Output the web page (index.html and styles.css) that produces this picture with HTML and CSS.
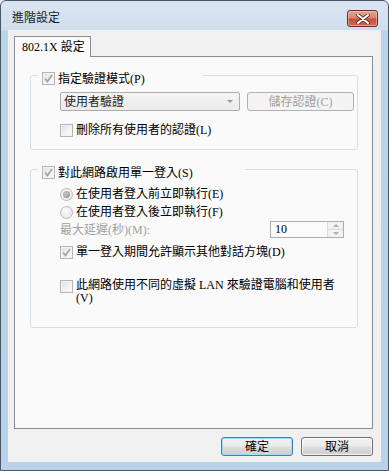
FILE: index.html
```html
<!DOCTYPE html>
<html lang="zh-Hant">
<head>
    <meta charset="UTF-8">
    <meta name="viewport" content="width=device-width, initial-scale=1.0">
    <title>進階設定</title>
    <link rel="stylesheet" href="styles.css">
</head>
<body>
    <div class="window">
        <div class="titlebar">
            <span class="title">進階設定</span>
            <button class="close-btn" aria-label="關閉">
                <svg width="14" height="10" viewBox="0 0 14 10">
                    <path d="M2 1 L12 9 M12 1 L2 9" stroke="#5a2a22" stroke-width="3.6" stroke-linecap="round"/>
                    <path d="M2 1 L12 9 M12 1 L2 9" stroke="#ffffff" stroke-width="2" stroke-linecap="round"/>
                </svg>
            </button>
        </div>

        <div class="client">
            <div class="tabs">
                <div class="tab active">802.1X 設定</div>
            </div>

            <div class="tab-panel">
                <div class="group group-auth">
                    <div class="group-head head-auth">
                        <span class="check checked"><svg width="11" height="11" viewBox="0 0 11 11"><path d="M2 5.5 L4.5 8.5 L9 2" fill="none" stroke="#a3a3a3" stroke-width="1.7"/></svg></span>
                        <span class="label">指定驗證模式(P)</span>
                    </div>
                    <div class="row row-mode">
                        <div class="select">
                            <span>使用者驗證</span>
                            <span class="arrow"></span>
                        </div>
                        <button class="btn btn-save" disabled>儲存認證(C)</button>
                    </div>
                    <div class="row row-check row-clear">
                        <span class="check"></span>
                        <span class="label">刪除所有使用者的認證(L)</span>
                    </div>
                </div>

                <div class="group group-sso">
                    <div class="group-head head-sso">
                        <span class="check checked"><svg width="11" height="11" viewBox="0 0 11 11"><path d="M2 5.5 L4.5 8.5 L9 2" fill="none" stroke="#a3a3a3" stroke-width="1.7"/></svg></span>
                        <span class="label">對此網路啟用單一登入(S)</span>
                    </div>
                    <div class="row row-radio row-before">
                        <span class="radio selected"></span>
                        <span class="label">在使用者登入前立即執行(E)</span>
                    </div>
                    <div class="row row-radio row-after">
                        <span class="radio"></span>
                        <span class="label">在使用者登入後立即執行(F)</span>
                    </div>
                    <div class="row row-delay">
                        <span class="label disabled">最大延遲(秒)(M):</span>
                        <div class="spinner">
                            <span class="spin-value">10</span>
                            <span class="spin-buttons">
                                <span class="spin-up"></span>
                                <span class="spin-down"></span>
                            </span>
                        </div>
                    </div>
                    <div class="row row-check row-dialogs">
                        <span class="check checked"><svg width="11" height="11" viewBox="0 0 11 11"><path d="M2 5.5 L4.5 8.5 L9 2" fill="none" stroke="#a3a3a3" stroke-width="1.7"/></svg></span>
                        <span class="label">單一登入期間允許顯示其他對話方塊(D)</span>
                    </div>
                    <div class="row row-check row-vlan">
                        <span class="check"></span>
                        <span class="label">此網路使用不同的虛擬 LAN 來驗證電腦和使用者<br>(V)</span>
                    </div>
                </div>
            </div>

            <div class="dialog-buttons">
                <button class="btn-dialog default">確定</button>
                <button class="btn-dialog">取消</button>
            </div>
        </div>
    </div>
</body>
</html>
```

FILE: styles.css
```css
* {
    margin: 0;
    padding: 0;
    box-sizing: border-box;
}

body {
    background: #ffffff;
    font-family: "Liberation Serif", "Noto Sans CJK TC", serif;
    font-size: 12px;
    line-height: 14px;
    color: #000;
}

button {
    font: inherit;
    color: inherit;
}

/* window frame */
.window {
    width: 389px;
    height: 471px;
    border: 1px solid #4b5664;
    border-radius: 6px 6px 0 0;
    background: linear-gradient(to bottom, #dae5f1 0, #cfdeee 29px, #bad2ea 30px, #b9d1ea 100%);
    padding: 0 7px 8px 7px;
    display: flex;
    flex-direction: column;
}

.titlebar {
    height: 29px;
    display: flex;
    justify-content: space-between;
    align-items: flex-start;
    padding-left: 4px;
}

.title {
    margin-top: 10px;
    color: #1b1b1b;
}

.close-btn {
    width: 31px;
    height: 17px;
    margin-top: 9px;
    margin-right: 3px;
    border: 1px solid #6e2d25;
    border-radius: 3px;
    background: linear-gradient(to bottom, #e8a493 0, #d98470 45%, #c2503c 55%, #cf6d58 100%);
    box-shadow: inset 0 0 0 1px rgba(255, 210, 200, 0.5);
    display: flex;
    align-items: center;
    justify-content: center;
}

/* client area */
.client {
    height: 432px;
    background: #f0f0f0;
    padding: 6px 8px 0 6px;
    display: flex;
    flex-direction: column;
}

.tabs {
    display: flex;
}

.tab {
    position: relative;
    z-index: 1;
    width: 77px;
    height: 21px;
    padding: 3px 0 0 7px;
    border: 1px solid #898c95;
    border-bottom: none;
    background: #fafafa;
    white-space: nowrap;
}

.tab-panel {
    height: 373px;
    margin-top: -1px;
    border: 1px solid #898c95;
    background: #fafafa;
    padding-top: 18px;
}

/* group boxes */
.group {
    margin: 0 14px 0 15px;
    border: 1px solid #d5dfe5;
    border-radius: 3px;
    padding: 0 3px 12px 29px;
}

.group-sso {
    margin-top: 19px;
    padding-bottom: 22px;
}

.group-head {
    display: flex;
    align-items: center;
    height: 13px;
    margin: -4px 0 0 -22px;
    padding-left: 4px;
    background: #fafafa;
    gap: 3px;
}

.head-auth {
    width: 165px;
}

.head-sso {
    width: 207px;
}

.row {
    display: flex;
    align-items: center;
}

.row-mode {
    margin-top: 7px;
    gap: 7px;
}

.row-check,
.row-radio {
    height: 14px;
    gap: 3px;
}

.row-clear {
    margin-top: 12px;
}

.row-before {
    margin-top: 8px;
}

.row-after {
    margin-top: 4px;
}

.row-delay {
    margin-top: 2px;
    width: 284px;
    height: 17px;
    justify-content: space-between;
}

.row-dialogs {
    margin-top: 7px;
}

.row-vlan {
    margin-top: 20px;
    height: auto;
    align-items: flex-start;
}

.row-vlan .label {
    line-height: 13px;
}

.row-vlan .check {
    margin-top: 1px;
}

.disabled {
    color: #a0a0a0;
}

/* check boxes and radio buttons */
.check {
    flex: none;
    width: 13px;
    height: 13px;
    border: 1px solid #b4b4b4;
    background: linear-gradient(135deg, #dedede 0, #f2f2f2 55%, #fbfbfb 100%);
    box-shadow: inset 0 0 0 1px #f4f4f4;
    display: flex;
    align-items: center;
    justify-content: center;
}

.radio {
    flex: none;
    width: 13px;
    height: 13px;
    border: 1px solid #b8b8b8;
    border-radius: 50%;
    background: radial-gradient(circle at 40% 35%, #fbfbfb 0, #e4e4e4 100%);
    display: flex;
    align-items: center;
    justify-content: center;
}

.radio.selected::after {
    content: '';
    width: 7px;
    height: 7px;
    border-radius: 50%;
    background: radial-gradient(circle at 40% 35%, #c8c8c8 0, #8a8a8a 100%);
}

/* combo box and buttons */
.select {
    width: 180px;
    height: 19px;
    border: 1px solid #acacac;
    border-radius: 2px;
    background: linear-gradient(to bottom, #f4f4f4, #ececec);
    padding-left: 3px;
    padding-right: 6px;
    display: flex;
    align-items: center;
    justify-content: space-between;
    color: #1e1e1e;
}

.arrow {
    width: 0;
    height: 0;
    border-left: 3px solid transparent;
    border-right: 3px solid transparent;
    border-top: 3px solid #9a9a9a;
}

.btn-save {
    width: 107px;
    height: 19px;
    border: 1px solid #adb2b5;
    border-radius: 3px;
    background: #f4f4f4;
    color: #a0a0a0;
}

.spinner {
    width: 74px;
    height: 17px;
    border: 1px solid #abadb3;
    background: #fbfbfb;
    display: flex;
    justify-content: space-between;
    padding-left: 4px;
}

.spin-value {
    line-height: 15px;
}

.spin-buttons {
    width: 16px;
    display: flex;
    flex-direction: column;
    border-left: 1px solid #dadada;
}

.spin-up,
.spin-down {
    flex: 1;
    display: flex;
    align-items: center;
    justify-content: center;
    background: #f2f2f2;
}

.spin-up {
    border-bottom: 1px solid #dadada;
}

.spin-up::after {
    content: '';
    border-left: 3px solid transparent;
    border-right: 3px solid transparent;
    border-bottom: 3px solid #b0b0b0;
}

.spin-down::after {
    content: '';
    border-left: 3px solid transparent;
    border-right: 3px solid transparent;
    border-top: 3px solid #b0b0b0;
}

/* dialog buttons */
.dialog-buttons {
    margin-top: 8px;
    display: flex;
    justify-content: flex-end;
    gap: 8px;
}

.btn-dialog {
    width: 72px;
    height: 19px;
    border: 1px solid #707070;
    border-radius: 3px;
    background: linear-gradient(to bottom, #f2f2f2 0, #ebebeb 48%, #dddddd 52%, #cfcfcf 100%);
    box-shadow: inset 0 0 0 1px rgba(255, 255, 255, 0.7);
}

.btn-dialog.default {
    border-color: #3c7fb1;
    box-shadow: inset 0 0 0 1px #9fdcf5;
}
```
